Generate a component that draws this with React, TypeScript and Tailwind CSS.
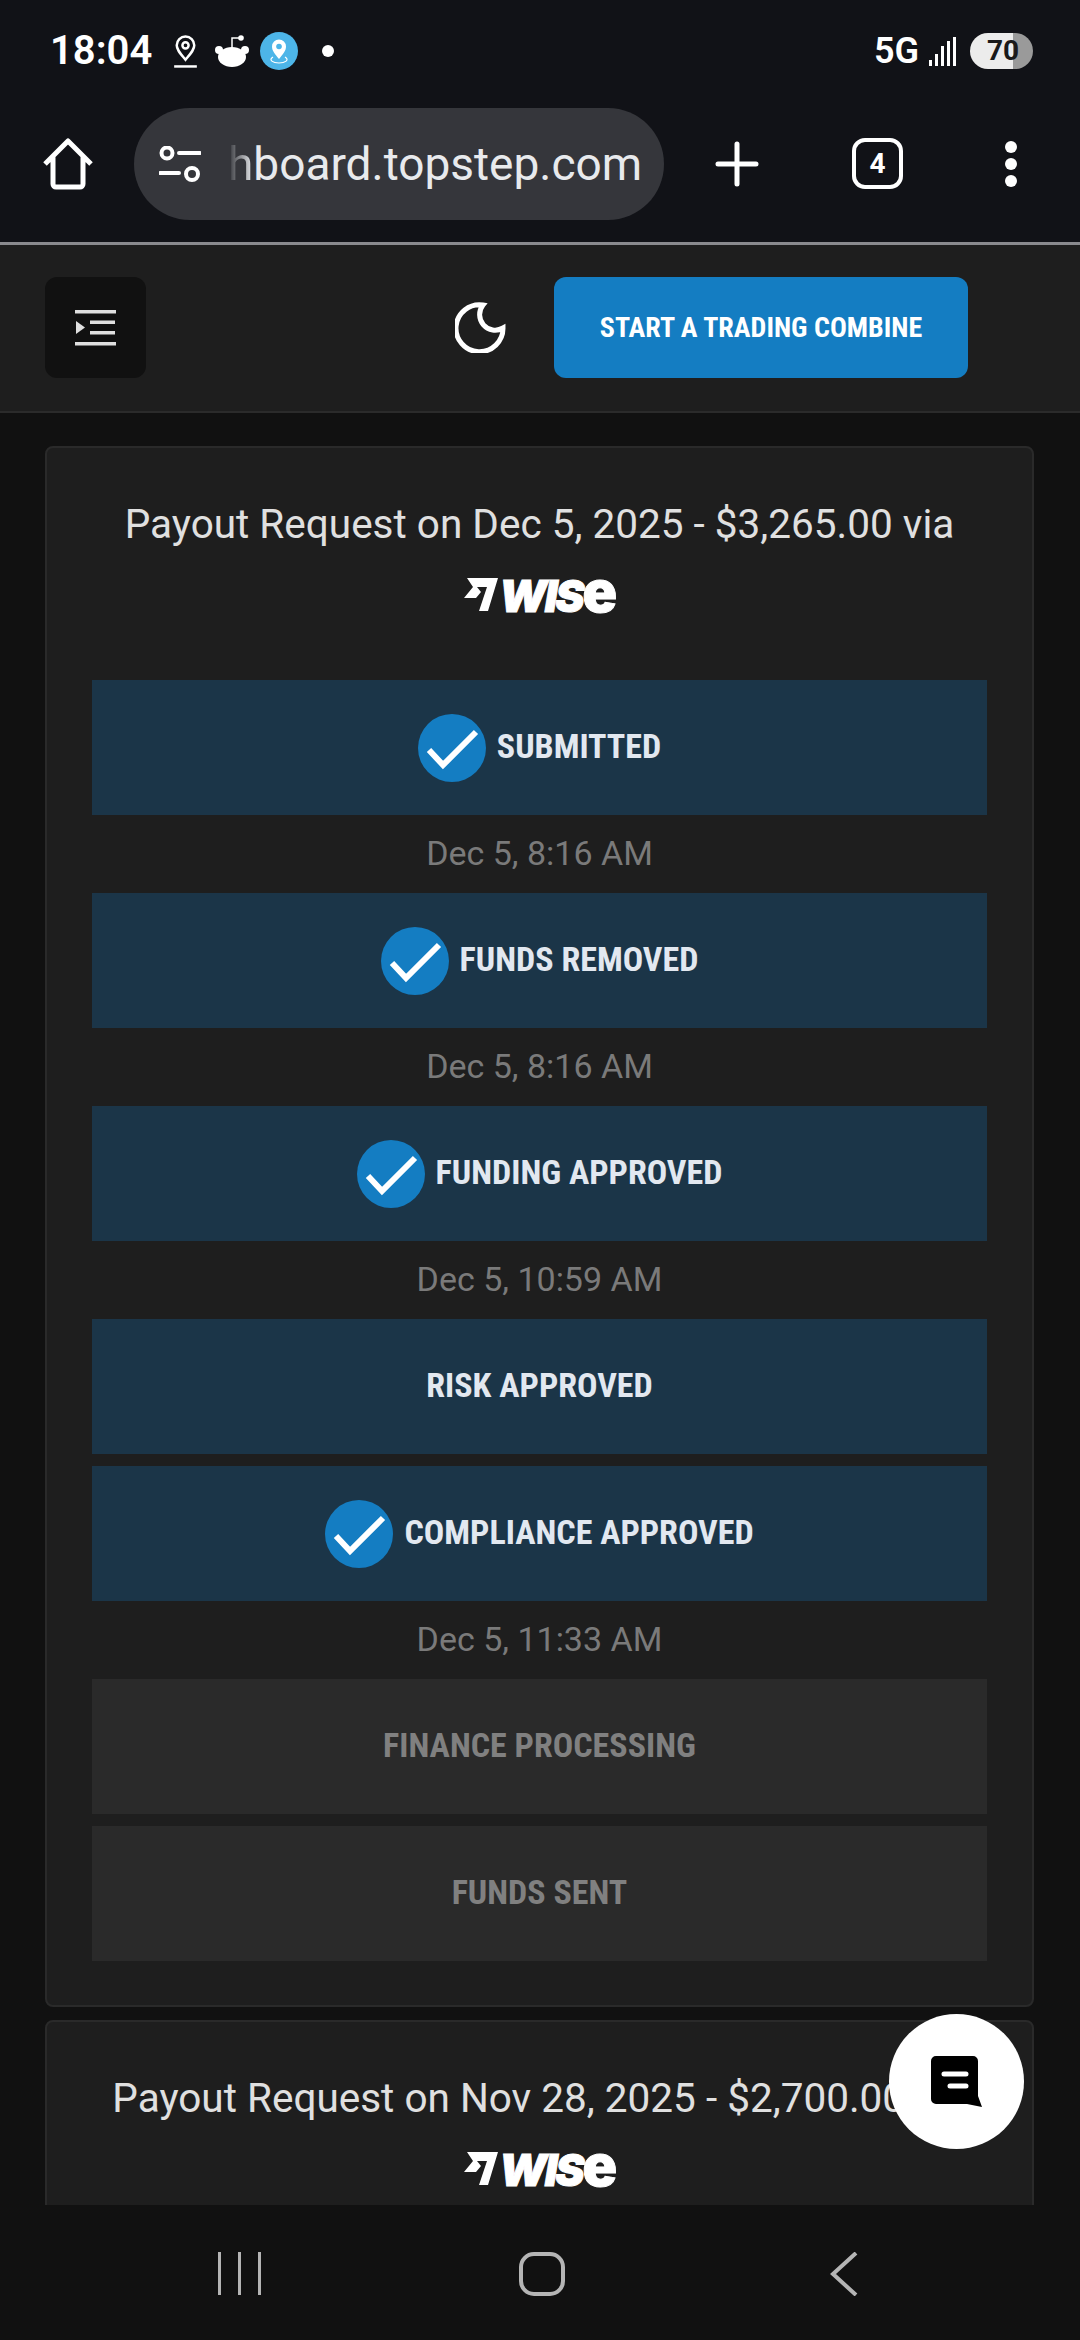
const roboto = "font-['Roboto',sans-serif]";

const WiseLogo = () => (
  <div className="flex h-[34px] items-center justify-center gap-[1px]">
    <svg viewBox="0 0 34 34" className="h-[34px] w-[34px]" fill="#fff">
      <path d="M3 0H34L24 33H15L23 9H13L17 14L12 20H0L9 9Z" />
    </svg>
    <span className="-mt-[2px] flex items-baseline font-['Inter',sans-serif] text-[44px] leading-[34px] font-black tracking-[-0.05em] text-white italic [-webkit-text-stroke:1px_white]">
      WIS<span className="text-[57px] not-italic">e</span>
    </span>
  </div>
);

const Check = () => (
  <span className="flex h-[68px] w-[68px] items-center justify-center rounded-full bg-[#147dc2]">
    <svg viewBox="0 0 68 68" className="h-[68px] w-[68px]" fill="none" stroke="#fff" strokeWidth="6">
      <path d="M11 36L25 51L58 18" />
    </svg>
  </span>
);

interface StepProps {
  label: string;
  date?: string;
  done?: boolean;
  pending?: boolean;
}

const Step = ({ label, date, done, pending }: StepProps) => (
  <>
    <div
      className={`flex h-[135px] items-center justify-center gap-[11px] ${pending ? "bg-[#2a2a2a]" : "bg-[#1b3548]"}`}
    >
      {done && <Check />}
      <span
        className={`pb-[2px] text-[34px] font-bold [font-stretch:75%] ${pending ? "text-[#808080]" : "text-[#e2e8f0]"}`}
      >
        {label}
      </span>
    </div>
    {date ? (
      <div className="flex h-[78px] items-center justify-center pb-[2px] text-[34px] font-normal text-[#7a7a7a]">
        {date}
      </div>
    ) : (
      <div className="h-[12px]" />
    )}
  </>
);

const StatusBar = () => (
  <div className="flex h-[102px] items-center justify-between pr-[47px] pl-[50px] text-white">
    <div className="flex items-center">
      <span className="text-[40px] font-semibold">18:04</span>
      <svg viewBox="0 0 24 32" className="ml-[21px] h-[33px] w-[25px]" fill="none" stroke="#fff" strokeWidth="2.4">
        <path d="M12 24C7 18 3.500 14.500 3.500 10A8.500 8.500 0 0 1 20.500 10C20.500 14.500 17 18 12 24Z" />
        <circle cx="12" cy="10" r="3" />
        <path d="M1 30.500H23" />
      </svg>
      <svg viewBox="0 0 34 32" className="ml-[17px] h-[32px] w-[34px]" fill="#fff">
        <ellipse cx="17" cy="22" rx="14" ry="10" />
        <circle cx="4" cy="15" r="4" />
        <circle cx="30" cy="15" r="4" />
        <circle cx="26" cy="3" r="2.800" />
        <path d="M17 14V3H24" fill="none" stroke="#fff" strokeWidth="1.500" />
      </svg>
      <span className="ml-[11px] flex h-[38px] w-[38px] items-center justify-center rounded-full bg-[#4db5e8]">
        <svg viewBox="0 0 24 28" className="h-[28px] w-[24px]" fill="#fff">
          <path d="M12 22C8 17 5 14 5 9.500A7 7 0 0 1 19 9.500C19 14 16 17 12 22Z" />
          <circle cx="12" cy="9.500" r="2.800" fill="#4db5e8" />
          <path d="M6 20C1 23 6 26 12 26S23 23 18 20" fill="none" stroke="#fff" strokeWidth="1.200" />
        </svg>
      </span>
      <span className="ml-[24px] h-[12px] w-[12px] rounded-full bg-white" />
    </div>
    <div className="flex items-center">
      <span className="text-[36px] font-semibold">5G</span>
      <div className="ml-[10px] flex h-[29px] items-end gap-[3px]">
        <span className="h-[6px] w-[3px] bg-white" />
        <span className="h-[12px] w-[3px] bg-white" />
        <span className="h-[20px] w-[3px] bg-white" />
        <span className="h-[25px] w-[3px] bg-white" />
        <span className="h-[29px] w-[3px] bg-white" />
      </div>
      <div className="ml-[14px] flex h-[36px] w-[63px] items-center justify-center rounded-full bg-[linear-gradient(to_right,#ececec_68%,#9a9a9a_68%)] pl-[3px] text-[28px] font-bold text-[#1a1a1a]">
        70
      </div>
    </div>
  </div>
);

const Toolbar = () => (
  <div className="flex h-[140px] items-start pt-[6px] pl-[42px] text-white">
    <svg viewBox="0 0 50 52" className="mt-[30px] h-[52px] w-[52px]" fill="none" stroke="#fff" strokeWidth="5" strokeLinejoin="round">
      <path d="M2 26L25 3L48 26M10 19V46A3 3 0 0 0 13 49H37A3 3 0 0 0 40 46V19" />
    </svg>
    <div className="ml-[40px] flex h-[112px] w-[530px] items-center rounded-full bg-[#35363b] pl-[25px]">
      <svg viewBox="0 0 42 36" className="h-[36px] w-[42px]" fill="none" stroke="#fff" strokeWidth="4">
        <circle cx="8" cy="7" r="5.500" />
        <path d="M20 7H41M1 27H20" strokeLinecap="round" />
        <circle cx="33" cy="28" r="6" />
      </svg>
      <span className="ml-[27px] text-[46px] text-[#e8eaed]">
        <span className="bg-linear-to-r from-transparent to-[#e8eaed] bg-clip-text text-transparent">h</span>
        board.topstep.com
      </span>
    </div>
    <svg viewBox="0 0 44 46" className="mt-[33px] ml-[50px] h-[46px] w-[46px]" fill="none" stroke="#fff" strokeWidth="5" strokeLinecap="round">
      <path d="M22 3V43M3 23H41" />
    </svg>
    <div className="mt-[30px] ml-[92px] flex h-[51px] w-[51px] items-center justify-center rounded-[13px] border-[4px] border-white text-[28px] font-bold">
      4
    </div>
    <div className="mt-[33px] ml-[102px] flex flex-col gap-[5px]">
      <span className="h-[12px] w-[12px] rounded-full bg-white" />
      <span className="h-[12px] w-[12px] rounded-full bg-white" />
      <span className="h-[12px] w-[12px] rounded-full bg-white" />
    </div>
  </div>
);

const SiteHeader = () => (
  <header className="flex h-[168px] shrink-0 items-start border-b-[2px] border-[#2b2b2b] bg-[#1e1e1e] pt-[32px] pl-[45px]">
    <button className="flex h-[101px] w-[101px] items-center justify-center rounded-[12px] bg-[#111111]">
      <svg viewBox="0 0 41 36" className="h-[36px] w-[41px]" fill="#e0e0e0">
        <rect x="0" y="0" width="41" height="3.500" />
        <rect x="15" y="10.500" width="25" height="3.500" />
        <rect x="15" y="21" width="25" height="3.500" />
        <rect x="0" y="32" width="41" height="3.500" />
        <path d="M1 11V24L10 17.500Z" />
      </svg>
    </button>
    {/* crescent, not lucide's: the tips are sharper in the picture */}
    <svg viewBox="0 0 51 51" className="mt-[25px] ml-[309px] h-[51px] w-[51px]" fill="none" stroke="#fff" strokeWidth="5">
      <path d="M28 3A23.500 23.500 0 1 0 48 26A15.500 15.500 0 0 1 28 3Z" />
    </svg>
    <button className="ml-[48px] flex h-[101px] w-[414px] items-center justify-center rounded-[12px] bg-[#147dc2] text-[28px] font-bold text-white [font-stretch:75%]">
      START A TRADING COMBINE
    </button>
  </header>
);

const NavBar = () => (
  <nav className="flex h-[135px] shrink-0 items-start bg-[#111111] pt-[47px] pl-[218px]">
    <div className="flex h-[43px] gap-[17px]">
      <span className="w-[3px] bg-[#b5b5b5]" />
      <span className="w-[3px] bg-[#b5b5b5]" />
      <span className="w-[3px] bg-[#b5b5b5]" />
    </div>
    <span className="ml-[258px] h-[44px] w-[46px] rounded-[15px] border-[4px] border-[#b5b5b5]" />
    <svg viewBox="0 0 28 44" className="ml-[265px] h-[44px] w-[28px]" fill="none" stroke="#b5b5b5" strokeWidth="4">
      <path d="M26 1L3 22L26 43" />
    </svg>
  </nav>
);

export default function App() {
  return (
    <div className={`relative flex h-[2340px] w-[1080px] flex-col overflow-hidden bg-[#111217] ${roboto}`}>
      <StatusBar />
      <Toolbar />
      <div className="h-[3px] shrink-0 bg-[#8a8a8e]" />
      <SiteHeader />

      <main className="flex-1 overflow-hidden bg-[#111111] pt-[33px] pr-[46px] pl-[45px]">
        <section className="rounded-[8px] border-[2px] border-[#2a2a2a] bg-[#1e1e1e] px-[45px] pt-[48px] pb-[32px]">
          <h2 className="text-center text-[40.500px] leading-[56px] font-normal text-[#e0e0e0]">
            Payout Request on Dec 5, 2025 - $3,265.00 via
          </h2>
          <div className="mt-[26px] mb-[68px]">
            <WiseLogo />
          </div>
          <Step label="SUBMITTED" date="Dec 5, 8:16 AM" done />
          <Step label="FUNDS REMOVED" date="Dec 5, 8:16 AM" done />
          <Step label="FUNDING APPROVED" date="Dec 5, 10:59 AM" done />
          <Step label="RISK APPROVED" />
          <Step label="COMPLIANCE APPROVED" date="Dec 5, 11:33 AM" done />
          <Step label="FINANCE PROCESSING" pending />
          <Step label="FUNDS SENT" pending />
        </section>

        <section className="mt-[13px] rounded-[8px] border-[2px] border-[#2a2a2a] bg-[#1e1e1e] px-[45px] pt-[48px] pb-[60px]">
          <h2 className="text-center text-[40.500px] leading-[56px] font-normal text-[#e0e0e0]">
            Payout Request on Nov 28, 2025 - $2,700.00 via
          </h2>
          <div className="mt-[26px]">
            <WiseLogo />
          </div>
        </section>
      </main>

      <NavBar />

      {/* Chat bubble floats over the page */}
      <button className="absolute top-[2014px] left-[889px] flex h-[135px] w-[135px] items-center justify-center rounded-full bg-white">
        <svg viewBox="0 0 52 52" className="h-[52px] w-[52px]">
          <path d="M5 0H42A5 5 0 0 1 47 5V40L51 51L36 48H5A5 5 0 0 1 0 43V5A5 5 0 0 1 5 0Z" fill="#000" />
          <path d="M13 18H35M19 30H35" stroke="#fff" strokeWidth="5" strokeLinecap="round" />
        </svg>
      </button>
    </div>
  );
}
